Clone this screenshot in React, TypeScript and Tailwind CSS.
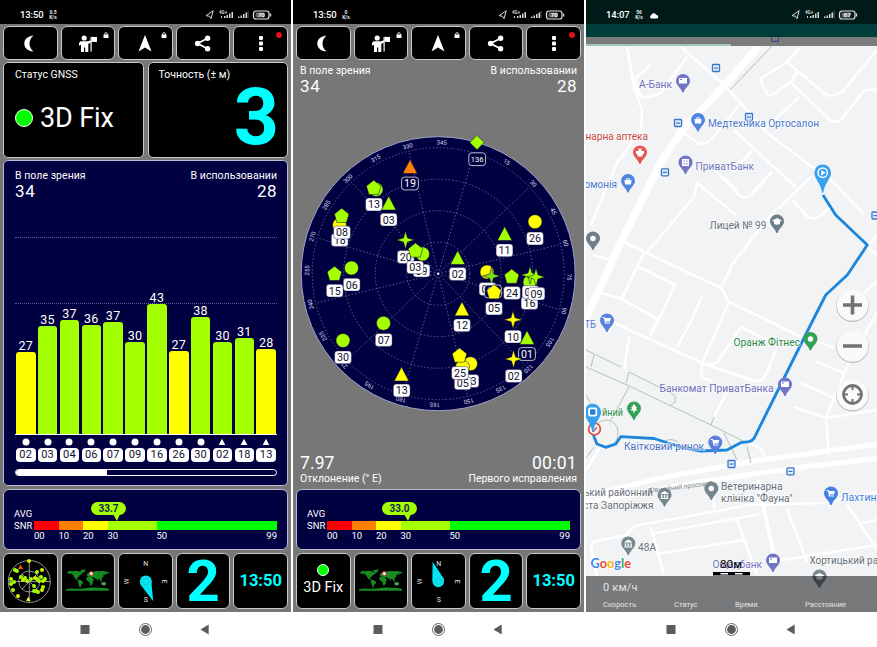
import React from "react";

const LIME = "#a4ff00";
const YELLOW = "#ffff00";

/* ---------- shared phone chrome ---------- */

function StatusIcons({ level }: { level: string }) {
  return (
    <svg width="70" height="12" viewBox="0 0 70 12" fontFamily="Roboto, sans-serif" fill="#d8d8d8">
      <path d="M1 6.700 8.200 1.700 6 9.700 4.600 7.300z" fill="none" stroke="#d8d8d8" strokeWidth="1" />
      <text x="14" y="4.500" fontSize="4.500" fontWeight="700">4G+</text>
      <path d="M16 9V7h1v2zM19 9V7h1.500v2zM21.500 9V6H23v3zM24 9V4.500h1.500V9zM26.500 9V3H28v6z" />
      <path d="M33 9V7.500h1.500V9zM35.500 9V6.500H37V9zM38 9V5h1.500v4zM40.500 9V3.500H42V9z" />
      <path d="M42.500 9V2h1v7z" fill="#666" />
      <rect x="48.500" y="2" width="15.500" height="8" rx="2.500" fill="none" stroke="#e4e4e4" strokeWidth="1.200" />
      <rect x="50.500" y="3.500" width="9" height="5" rx="1" fill="#666" />
      <rect x="65" y="4.500" width="1.200" height="3" />
      <text x="56.300" y="8.300" fontSize="6.200" fontWeight="700" textAnchor="middle" fill="#fff">{level}</text>
    </svg>
  );
}

function StatusBar({ time, speed, level, tone, cloud }: { time: string; speed: string; level: string; tone: string; cloud?: boolean }) {
  return (
    <div className={`flex h-6 items-center pl-5 pr-4 pt-[6px] text-white ${tone}`}>
      <span className="w-[25px] text-[9.500px] font-medium leading-none tracking-[-0.1px]">{time}</span>
      <span className="ml-1 flex w-2 flex-col items-center text-[5px] font-bold leading-[5px] text-gray-200">
        <span>{speed}</span>
        <span>K/s</span>
      </span>
      {cloud && (
        <svg className="ml-[6px]" width="10" height="7" viewBox="0 0 10 7" fill="#fff">
          <path d="M2 6.500a1.800 1.800 0 0 1 .2-3.300A2.700 2.700 0 0 1 7.300 3a1.800 1.800 0 0 1 .7 3.500z" />
        </svg>
      )}
      <span className="ml-auto"><StatusIcons level={level} /></span>
    </div>
  );
}

function NavBar() {
  return (
    <div className="flex h-[35px] items-center bg-white pl-[79px]">
      <svg width="134" height="16" viewBox="0 0 134 16" fill="#5c5c5c">
        <rect x="1.500" y="3" width="9" height="9" />
        <circle cx="66.500" cy="7.500" r="6" fill="none" stroke="#666" strokeWidth="1" />
        <circle cx="66.500" cy="7.500" r="4.400" />
        <path d="M121.500 7.500l8.200-5v10z" />
      </svg>
    </div>
  );
}

/* ---------- toolbar ---------- */

const Lock = () => (
  <svg className="absolute right-[5px] top-[5px]" width="6" height="7" viewBox="0 0 6 7">
    <rect x="0.500" y="2.500" width="5" height="3.500" fill="#fff" />
    <path d="M1.700 3V1.900a1.300 1.300 0 0 1 2.600 0V3" fill="none" stroke="#fff" strokeWidth=".8" />
  </svg>
);

const toolIcons = [
  <path key="moon" d="M12.500 1.700C10.500 1.400 3.300 3 3.300 9.500S10.500 17.700 12.500 17.300C7.200 13.500 7.200 5.500 12.500 1.700z" />,
  <g key="guide">
    <circle cx="5.200" cy="4" r="2.600" />
    <path d="M1.500 7.300h7.700l2.600-1 .7 1.700-3.200 2V18H6.200v-4.500H5V18H2v-7H1l-1 1V9z" />
    <path d="M11.500 3h1.200v14.500h-1.200z" />
    <path d="M12.500 3c2-1 3 .8 5.500-.2v5c-2.500 1-3.500-.8-5.500.2z" />
  </g>,
  <path key="nav" d="M9 1l6.500 16.500L9 13.500 2.500 17.500z" />,
  <g key="share">
    <circle cx="13.600" cy="4.200" r="2.700" />
    <circle cx="3.600" cy="9.500" r="2.700" />
    <circle cx="13.600" cy="14.800" r="2.700" />
    <path d="M13.600 4.200L3.600 9.500l10 5.300" fill="none" stroke="#fff" strokeWidth="1.800" />
  </g>,
  <g key="more">
    <rect x="7" y="2" width="4" height="4" rx="1" />
    <rect x="7" y="7.500" width="4" height="4" rx="1" />
    <rect x="7" y="13" width="4" height="4" rx="1" />
  </g>,
];

function Toolbar() {
  return (
    <div className="grid h-[34px] grid-cols-5 gap-[3px]">
      {toolIcons.map((icon, i) => (
        <div key={i} className="relative flex items-center justify-center rounded-[6px] border border-[#c9c9c9] bg-black">
          <svg width="18" height="19" viewBox="0 0 18 19" fill="#fff">{icon}</svg>
          {(i === 1 || i === 2) && <Lock />}
          {i === 4 && <span className="absolute right-[5px] top-[5px] h-[6px] w-[6px] rounded-full bg-[#e0101c]" />}
        </div>
      ))}
    </div>
  );
}

/* ---------- panels ---------- */

function Counts() {
  return (
    <div className="flex justify-between text-white">
      <div>
        <div className="text-[10.500px] leading-[14px] tracking-[0.05px]">В поле зрения</div>
        <div className="text-[17px] leading-[17px] tracking-[0.8px]">34</div>
      </div>
      <div className="text-right">
        <div className="text-[10.500px] leading-[14px] tracking-[0.05px]">В использовании</div>
        <div className="text-[17px] leading-[17px] tracking-[0.5px]">28</div>
      </div>
    </div>
  );
}

const signals = [
  { id: "02", v: 27, h: 82, c: YELLOW, glonass: false },
  { id: "03", v: 35, h: 108, c: LIME, glonass: false },
  { id: "04", v: 37, h: 114, c: LIME, glonass: false },
  { id: "06", v: 36, h: 109, c: LIME, glonass: false },
  { id: "07", v: 37, h: 112, c: LIME, glonass: false },
  { id: "09", v: 30, h: 92, c: LIME, glonass: false },
  { id: "16", v: 43, h: 130, c: LIME, glonass: false },
  { id: "26", v: 27, h: 83, c: YELLOW, glonass: false },
  { id: "30", v: 38, h: 117, c: LIME, glonass: false },
  { id: "02", v: 30, h: 92, c: LIME, glonass: true },
  { id: "18", v: 31, h: 96, c: LIME, glonass: true },
  { id: "13", v: 28, h: 85, c: YELLOW, glonass: true },
];

function SignalChart() {
  return (
    <div className="flex h-[326px] flex-col rounded-[5px] border border-[#b9b9d0] bg-[#010040] pb-[9px] pl-[11px] pr-[10px] pt-[8px]">
      <Counts />
      <div className="relative flex flex-1 items-end justify-between border-b border-white px-px">
        <div className="absolute inset-x-0 bottom-[196px] border-t border-dotted border-[#5a5a94]" />
        <div className="absolute inset-x-0 bottom-[130px] border-t border-dotted border-[#5a5a94]" />
        {signals.map((s, i) => (
          <div key={i} className="relative flex w-[19.500px] flex-col items-center">
            <span className="text-[12.500px] leading-[12px] tracking-[0.3px] text-white">{s.v}</span>
            <div className="w-[19.500px] rounded-t-[3px]" style={{ height: s.h, backgroundColor: s.c }} />
          </div>
        ))}
      </div>
      <div className="mt-[3px] flex justify-between px-px">
        {signals.map((s, i) => (
          <div key={i} className="flex w-[19.500px] flex-col items-center">
            <svg width="8" height="8" viewBox="0 0 8 8" fill="#fff">
              {s.glonass ? <path d="M4 .8l3.300 6.200H.7z" /> : <circle cx="4" cy="4" r="3.500" />}
            </svg>
            <span className="mt-[2px] h-[14px] w-[19.500px] rounded-[4px] bg-white text-center text-[11px] leading-[14px] tracking-[0.2px] text-[#101030]">
              {s.id}
            </span>
          </div>
        ))}
      </div>
      <div className="mt-[7px] h-[7px] rounded-full border border-white">
        <div className="h-full w-[91px] rounded-l-full bg-white" />
      </div>
    </div>
  );
}

function SnrPanel({ value, first }: { value: string; first?: boolean }) {
  return (
    <div className="flex h-[61px] rounded-[6px] border border-[#b9b9d0] bg-[#010040] pl-[10px] pr-[10px] text-white">
      <div className="w-5 pt-[18px] text-[9.500px] leading-[11.500px]">
        <div>AVG</div>
        <div>SNR</div>
      </div>
      <div className="relative flex-1 pt-[31px]">
        <div className={`absolute top-[12px] flex h-[13px] w-[35px] items-center justify-center rounded-full bg-[#a4ff00] text-[10px] font-bold leading-none text-[#14245a] ${first ? "left-[57px]" : "left-[55px]"}`}>
          {value}
          <svg className="absolute right-[6px] top-[12px]" width="7" height="7" viewBox="0 0 7 7" fill={LIME}>
            <path d="M0 0h7L4 7z" />
          </svg>
        </div>
        <div className="flex h-[9px]">
          <div className="w-[24.500px] bg-[#ff0000]" />
          <div className="w-[24.500px] bg-[#ff8000]" />
          <div className="w-[24.500px] bg-[#ffff00]" />
          <div className="w-[49px] bg-[#a4ff00]" />
          <div className="flex-1 bg-[#00ff00]" />
        </div>
        <div className="flex text-[9.500px] leading-[11px]">
          <span className="w-[24.500px]">00</span>
          <span className="w-[24.500px]">10</span>
          <span className="w-[24.500px]">20</span>
          <span className="w-[49px]">30</span>
          <span>50</span>
          <span className="ml-auto">99</span>
        </div>
      </div>
    </div>
  );
}

/* ---------- bottom tiles ---------- */

const dots: [number, number][] = [
  [30, 7], [16, 16], [18, 17], [38, 18], [43, 16], [12, 25], [15, 28], [22, 23], [24, 26], [26, 24], [28, 27], [14, 36],
  [19, 42], [38, 25], [40, 27], [42, 23], [44, 27], [35, 32], [37, 37], [39, 38], [43, 36], [46, 25], [44, 33], [32, 25], [36, 24], [12, 30], [35, 37],
];

function MiniSky() {
  return (
    <svg width="56" height="54" viewBox="3 0 56 54">
      <g fill="none" stroke="#b8b8b8" strokeWidth=".8">
        <circle cx="30.300" cy="27.500" r="21" />
        <circle cx="30.300" cy="27.500" r="10.500" />
        <path d="M30.300 6.500v42M9.300 27.500h42M23 20l15 15M38 20L23 35" />
      </g>
      {dots.map(([x, y], i) => <circle key={i} cx={x} cy={y} r="2" fill={i % 4 === 0 ? "#d9f000" : LIME} />)}
      <path d="M21.500 10.500l2.500 4.500h-5z" fill="#ff5a00" />
      <path d="M29.300 42.500l2.200 4.500h-4.400z" fill={YELLOW} />
    </svg>
  );
}

function WorldMap() {
  return (
    <svg width="44" height="24" viewBox="0 0 44 24" fill="#178a22">
      <path d="M1 3.500l2.500-1.700 3 .4 3.500-.5 4 1 1.500-.5 1.500 1.500-1.500 1.500-1.800 1-1 1.800-1.500.6-.2 1.400 1.200.5.700 1L11 11 9 9.500 7.500 6.500 5 4.500 2.500 5z" />
      <path d="M12.500 10.800l2 .2 2.800 2-.8 1.700-1.300 1-.5 2.300-1 .8-.7-3-1.200-2.500z" />
      <path d="M14 1.300l4.500-.8 1.300.5-2 2.500-1.300.5z" />
      <path d="M20.500 6.500l.8-1.800 2-1.500 1.500-1 2 .8 3-1 4 .2 4-.3 3 .8 2.700.4-1 1.300-2 .2-.7 1.500-1.500-.8-1 .7.300 1.500-1.600 1.300-.5 2-1.200 1-1.200-2-1 .2-.5 2-1.300-2.200-2-.7-1.300-1-1.500.2-1-.6z" />
      <path d="M20.800 8l2-.7 3 .6 1.200 2 1 .6-1 1.800-.4 2.500-1.600 1.900-1-.8-.5-3-2.400-1.200-.8-2z" />
      <path d="M35 14.500l1.800-1.500 1.500.3.800-.5 1 2-.8 1.700-1.500-.3-1.500.2z M34 10.500l1.500 1 1.500 1-2-.3z" fill="#4f9a58" />
      <path d="M0 20.500c5-2 9-.5 14-.7s9-1.800 14-1.300 10-.3 15 1.500v1.800H0z" />
      <circle cx="25.300" cy="4.600" r="1.900" fill="#fff" stroke="#e03030" strokeWidth="1" />
    </svg>
  );
}

function Compass({ up }: { up?: boolean }) {
  return (
    <svg width="53" height="54" viewBox="0 0 53 54" fill="#e8e8e8" fontFamily="Roboto, sans-serif" fontSize="7" textAnchor="middle">
      {up ? (
        <g>
          <path d="M20.800 7.500L20.500 27l6 3.500 6-5z" fill="#00e8f4" />
          <circle cx="26.500" cy="27.500" r="5.800" fill="#00e8f4" />
          <circle cx="26.500" cy="27.500" r="3.200" fill="none" stroke="#40a8b8" strokeWidth=".7" />
        </g>
      ) : (
        <g>
          <path d="M34.500 47.500L22 31l10.500-4z" fill="#00e8f4" />
          <circle cx="27" cy="27.500" r="6" fill="#00e8f4" />
          <circle cx="27" cy="27.500" r="3.200" fill="none" stroke="#40a8b8" strokeWidth=".7" />
        </g>
      )}
      <text x="27" y="11.500">N</text>
      <text x="27" y="48.500">S</text>
      <text transform="translate(10.500 27.500) rotate(-90)" fontSize="6.500">W</text>
      <text transform="translate(43 27.500) rotate(90)" fontSize="6.500">E</text>
    </svg>
  );
}

function Tiles({ fix }: { fix?: boolean }) {
  const tile = "flex items-center justify-center rounded-[6px] border border-[#c9c9c9] bg-black";
  return (
    <div className="grid h-[56px] grid-cols-5 gap-[3px] text-white">
      <div className={`${tile} flex-col`}>
        {fix ? (
          <>
            <span className="mt-[-3px] h-3 w-3 rounded-full border border-white bg-[#00ff00]" />
            <span className="mt-[4px] whitespace-nowrap text-[14.500px] leading-[16px]">3D Fix</span>
          </>
        ) : <MiniSky />}
      </div>
      <div className={tile}><WorldMap /></div>
      <div className={tile}><Compass up={fix} /></div>
      <div className={`${tile} text-[58px] font-bold leading-[52px] text-[#00ffff]`}>2</div>
      <div className={`${tile} text-[16.500px] font-bold leading-none text-[#00ffff]`}>13:50</div>
    </div>
  );
}

/* ---------- sky plot ---------- */

type Shape = "circle" | "tri" | "pent" | "star" | "diamond";
type Mark = { k: Shape; x: number; y: number; c: string } | { k: "tag"; x: number; y: number; t: string; dark?: boolean };

const L = LIME;
const Y = YELLOW;
const marks: Mark[] = [
  { k: "diamond", x: 477, y: 142.5, c: L }, { k: "tag", x: 477.2, y: 159.2, t: "136", dark: true },
  { k: "tri", x: 410, y: 167, c: "#ff8000" }, { k: "tag", x: 410, y: 183.5, t: "19", dark: true },
  { k: "circle", x: 376, y: 189.5, c: L }, { k: "pent", x: 373.7, y: 188, c: L }, { k: "tag", x: 374, y: 204.5, t: "13" },
  { k: "tri", x: 388.7, y: 203.5, c: L }, { k: "tag", x: 388.7, y: 219.7, t: "03" },
  { k: "circle", x: 339.5, y: 225, c: Y }, { k: "tag", x: 339.7, y: 240, t: "18" },
  { k: "pent", x: 341.7, y: 216, c: L }, { k: "tag", x: 342, y: 232.5, t: "08" },
  { k: "star", x: 405.5, y: 240, c: L }, { k: "tag", x: 405.7, y: 257, t: "20" },
  { k: "circle", x: 422.5, y: 254, c: L }, { k: "tag", x: 421.5, y: 270.7, t: "09" },
  { k: "pent", x: 415.5, y: 250.7, c: L }, { k: "tag", x: 415.2, y: 267.3, t: "03" },
  { k: "tri", x: 457.7, y: 258, c: L }, { k: "tag", x: 457.7, y: 274, t: "02" },
  { k: "tri", x: 504.7, y: 234, c: L }, { k: "tag", x: 504.5, y: 250.3, t: "11" },
  { k: "circle", x: 535, y: 221.7, c: Y }, { k: "tag", x: 535, y: 238.5, t: "26" },
  { k: "circle", x: 351.5, y: 268, c: L }, { k: "tag", x: 351.7, y: 284.7, t: "06" },
  { k: "pent", x: 334.5, y: 274, c: L }, { k: "tag", x: 334.7, y: 290.7, t: "15" },
  { k: "circle", x: 383.5, y: 323.3, c: L }, { k: "tag", x: 383.7, y: 340, t: "07" },
  { k: "circle", x: 343, y: 340.5, c: L }, { k: "tag", x: 343, y: 357.3, t: "30" },
  { k: "tri", x: 401.5, y: 374.5, c: Y }, { k: "tag", x: 401.7, y: 390.5, t: "13" },
  { k: "tri", x: 462, y: 309.3, c: Y }, { k: "tag", x: 462, y: 325.3, t: "12" },
  { k: "circle", x: 487, y: 272, c: Y }, { k: "star", x: 491.5, y: 276, c: "#7fe010" },
  { k: "tag", x: 487.5, y: 289, t: "02" }, { k: "tag", x: 493, y: 291.5, t: "14", dark: true },
  { k: "pent", x: 494, y: 292.3, c: Y }, { k: "tag", x: 494, y: 308.5, t: "05" },
  { k: "pent", x: 511.7, y: 276.8, c: L }, { k: "tag", x: 512, y: 293, t: "24" },
  { k: "circle", x: 530, y: 282, c: L }, { k: "star", x: 530, y: 275, c: L }, { k: "tag", x: 529.5, y: 303, t: "16" },
  { k: "tag", x: 530.5, y: 292, t: "04" }, { k: "star", x: 536, y: 277, c: L }, { k: "tag", x: 536.5, y: 293.7, t: "09" },
  { k: "star", x: 513, y: 319.7, c: Y }, { k: "tag", x: 513, y: 336.7, t: "10" },
  { k: "tri", x: 527, y: 338, c: L }, { k: "tag", x: 527, y: 354, t: "01", dark: true },
  { k: "star", x: 513.5, y: 359, c: Y }, { k: "tag", x: 513.7, y: 376, t: "02" },
  { k: "circle", x: 470.5, y: 363.7, c: Y }, { k: "tag", x: 470.5, y: 381, t: "03" },
  { k: "circle", x: 462.5, y: 367, c: Y }, { k: "tag", x: 462.7, y: 383.3, t: "05" },
  { k: "pent", x: 459.5, y: 355.7, c: Y }, { k: "tag", x: 460, y: 373, t: "25" },
];

const shapePaths: Record<Shape, string> = {
  circle: "M-7 0a7 7 0 1 0 14 0a7 7 0 1 0-14 0z",
  tri: "M0-7.500L7.300 6.500H-7.300z",
  pent: "M0-7.800L7.300-2 4.800 6.500H-4.800L-7.300-2z",
  star: "M0-9L2-2 9 0 2 2 0 9-2 2-9 0-2-2z",
  diamond: "M0-7.200L7.200 0 0 7.200-7.200 0z",
};

function SkyPlot() {
  const cx = 438.2;
  const cy = 273.7;
  const at = (deg: number, r: number) => {
    const a = (deg * Math.PI) / 180;
    return [cx + r * Math.sin(a), cy - r * Math.cos(a)];
  };
  const azimuths = Array.from({ length: 24 }, (_, i) => i * 15).filter((a) => a !== 0);
  return (
    <svg width="291" height="290" viewBox="293 128 291 290" fontFamily="Roboto, sans-serif" textAnchor="middle">
      <circle cx={cx} cy={cy} r="137" fill="#010040" stroke="#a0a0c8" strokeWidth="1" />
      <g fill="none" stroke="#65659c" strokeWidth=".9" strokeDasharray="1.500 2">
        {[31.5, 63, 94.5, 126].map((r) => <circle key={r} cx={cx} cy={cy} r={r} />)}
        {Array.from({ length: 12 }, (_, i) => {
          const [x, y] = at(i * 30 + 16.5, 126);
          return <path key={i} d={`M${cx} ${cy}L${x} ${y}`} />;
        })}
      </g>
      <circle cx={cx} cy={cy} r="1" fill="#fff" />
      {azimuths.map((a) => {
        const [x, y] = at(a + 16.5, 129);
        return (
          <text key={a} fontSize="6" fill="#dcdcf0" transform={`translate(${x} ${y}) rotate(${a + 16.5})`}>{a}</text>
        );
      })}
      {marks.map((m, i) =>
        m.k === "tag" ? (
          <g key={i}>
            <rect x={m.x - 8.4} y={m.y - 6.4} width="16.800" height="12.800" rx="3" fill={m.dark ? "#010040" : "#fff"} stroke={m.dark ? "#d0d0e0" : "#010040"} strokeWidth={m.dark ? 0.9 : 0.4} />
            <text x={m.x} y={m.y + (m.t.length > 2 ? 2.8 : 3.8)} fontSize={m.t.length > 2 ? 7.5 : 10.7} fill={m.dark ? "#fff" : "#101030"}>{m.t}</text>
          </g>
        ) : (
          <path key={i} d={shapePaths[m.k]} transform={`translate(${m.x} ${m.y})`} fill={m.c} stroke="#010040" strokeWidth=".5" />
        )
      )}
    </svg>
  );
}

/* ---------- map ---------- */

const streets = [
  "M681 47L722 83 741 103 766 132 807 163 831 180 864 214",
  "M627 47L634 87 642 110 641 130 617 163 591 225",
  "M687 57L661 93Q650 98 641 97L634 80 651 65",
  "M801 47L787 62 763 77Q760 80 762 84L767 94Q770 96 774 94L791 82 797 72",
  "M787 62L825 94Q833 99 844 90L877 50",
  "M791 83L830 120Q838 125 844 116L863 92Q867 88 877 90",
  "M741 103L714 136Q706 146 698 143L684 133",
  "M799 97L764 130",
  "M734 130L766 160 796 187",
  "M752 151L732 172",
  "M792 200L808 217Q814 221 820 216L831 207",
  "M779 208L811 177",
  "M712 168L736 190M697 183L736 215M697 183L694 197 647 252",
  "M727 180L739 195Q744 200 750 196L772 172",
  "M624 242L647 253 721 288 729 302 771 322 801 337",
  "M721 288L732 265 757 232 777 208",
  "M644 253L622 298M601 293L622 299 659 320",
  "M639 267L675 285 657 323 650 332",
  "M702 297L689 325 677 347",
  "M729 302L719 325 702 363",
  "M609 320L629 330 707 365 755 381Q763 382 766 374L776 350",
  "M702 363L701 377 712 381M741 327L717 363 707 365",
  "M741 327L771 342M629 337L624 370",
  "M659 320L650 336M593 255L610 260",
  "M877 281L862 295M877 255L867 247 877 235",
  "M817 362L844 373 877 312M801 383L834 398 850 360M814 340L834 348",
  "M794 407L826 418 877 410M826 418L829 455M834 398L826 418",
  "M729 388L714 417M744 441L760 448 768 462",
  "M600 448L586 470",
  "M597 577L591 548Q591 543 596 541L627 535Q630 527 640 525L750 505 824 503 877 492",
  "M651 534L761 514M651 527L664 575M656 554L744 540",
  "M737 519L757 575M787 509L807 562M847 505L877 549M770 562L877 545M862 523L877 520",
  "M714 508L714 500",
];

const paths = [
  "M586 350L621 367M586 367L627 385 711 425 747 443M594 355L591 367",
  "M629 372L671 393Q677 396 675 402L671 405M629 372L626 383",
  "M714 417L711 425M629 387L611 420M724 433L737 460M747 447L751 463",
  "M586 395L592 406M586 458L594 447",
  "M594 432a12 12 0 0 1 24 0q0 8-4 11M664 442q6-5 14 0",
];

const pins: { x: number; y: number; c: string; g: "card" | "bag" | "cross" | "dot" | "cap" | "cart" | "tree" | "bank" | "box" }[] = [
  { x: 683, y: 81, c: "#7176c4", g: "card" },
  { x: 698, y: 120, c: "#5086df", g: "bag" },
  { x: 640, y: 152.5, c: "#e4584f", g: "cross" },
  { x: 685.5, y: 162.5, c: "#7176c4", g: "box" },
  { x: 628, y: 181, c: "#5086df", g: "bag" },
  { x: 593, y: 238.5, c: "#6f7f86", g: "dot" },
  { x: 777, y: 221.5, c: "#6a7f87", g: "cap" },
  { x: 607, y: 320.5, c: "#5b80dd", g: "cart" },
  { x: 810.5, y: 339, c: "#35a155", g: "dot" },
  { x: 785, y: 384.5, c: "#7176c4", g: "card" },
  { x: 634, y: 408.5, c: "#35a155", g: "tree" },
  { x: 715.3, y: 442.5, c: "#5b80dd", g: "cart" },
  { x: 664.5, y: 495, c: "#75868f", g: "bank" },
  { x: 711.3, y: 488.5, c: "#75868f", g: "dot" },
  { x: 831, y: 493.5, c: "#4682e4", g: "cart" },
  { x: 628.3, y: 543.5, c: "#75868f", g: "bank" },
  { x: 773, y: 560.5, c: "#7176c4", g: "card" },
  { x: 819.5, y: 576.5, c: "#75868f", g: "cap" },
];

const glyphs = {
  card: <path d="M-4-3h8v5.500h-8zM-3-2v1h2v-1z" fillRule="evenodd" />,
  bag: <path d="M-3.500-1H-2a2 2 0 0 1 4 0h1.500l-.5 4.500h-6zM-1-1h2a1 1 0 0 0-2 0z" fillRule="evenodd" />,
  cross: <path d="M-1.500-4h3v2.500H4v3H2.500V4h-5V1.500H-4v-3h2.500z" />,
  dot: <circle r="2.700" />,
  cap: <path d="M-5-1L0-3.500 5-1 3 0v2.500Q0 4-3 2.500V0z" />,
  cart: <path d="M-4.500-3.500h2l.5 1H4L3 1h-4.500l.5 1h4v1h-5L-3-2.500h-1.500z" />,
  tree: <path d="M0-4.500L3-.5H1.800L3.500 2H.7v2H-.7V2h-2.800l1.700-2.500H-3z" />,
  bank: <path d="M-4-1.500L0-4l4 2.500V-1h-8zM-3.500-.3h1.400v3h-1.400zM-.7-.3H.7v3H-.7zM2.100-.3h1.400v3H2.100zM-4 3h8v1h-8z" />,
  box: <path d="M-3.500-3.500h7v7h-7zM-2-2v1.300h1.300V-2zM.7-2v1.300H2V-2zM-2 .7V2h1.300V.7zM.7.7V2H2V.7z" fillRule="evenodd" />,
};

const places: { t: string; x: number; y: number; w: number; c: string }[] = [
  { t: "А-Банк", x: 639, y: 88, w: 33, c: "#6a6fbb" },
  { t: "Медтехника Ортосалон", x: 708, y: 127, w: 111, c: "#4a78cc" },
  { t: "нарна аптека", x: 585.5, y: 139.5, w: 62.5, c: "#c5443f" },
  { t: "ПриватБанк", x: 695.5, y: 169.5, w: 58.5, c: "#7074bd" },
  { t: "омонія", x: 584.5, y: 188, w: 32.5, c: "#4a78cc" },
  { t: "Лицей № 99", x: 709.5, y: 228.5, w: 57, c: "#667078" },
  { t: "ТБ", x: 584.5, y: 328, w: 11.5, c: "#4a78cc" },
  { t: "Оранж Фітнес", x: 733.5, y: 346, w: 66.5, c: "#2c8a48" },
  { t: "Банкомат ПриватБанка", x: 659.5, y: 391.5, w: 114, c: "#6a6fbb" },
  { t: "йний", x: 602, y: 415.5, w: 21, c: "#2c8a48" },
  { t: "Квітковий ринок", x: 624, y: 449.5, w: 80, c: "#4a70c4" },
  { t: "Ветеринарна", x: 721, y: 490, w: 61.5, c: "#667078" },
  { t: "клініка \"Фауна\"", x: 721, y: 502, w: 71.5, c: "#667078" },
  { t: "ький районний", x: 584, y: 496.3, w: 69, c: "#667078" },
  { t: "ста Запоріжжя", x: 583, y: 508.5, w: 70.5, c: "#667078" },
  { t: "48А", x: 638, y: 551, w: 18, c: "#667078" },
  { t: "Лахтинс", x: 841, y: 501, w: 41, c: "#3f7fe0" },
  { t: "Хортицький ра", x: 809.5, y: 563.5, w: 68.5, c: "#667078" },
  { t: "Ощадбанк", x: 712.5, y: 568, w: 49.5, c: "#7074bd" },
];

const stops: [number, number][] = [[716, 68], [678, 123], [749, 117], [665, 172.3], [875.5, 215.5], [731.5, 464], [790.5, 471.3]];

function CityMap() {
  return (
    <svg width="291" height="566" viewBox="586 46 291 566" fontFamily="Roboto, sans-serif">
      <rect x="586" y="46" width="291" height="566" fill="#f1f3f4" />
      <g fill="none" stroke="#fff" strokeWidth="2.600" strokeLinejoin="round">
        {streets.map((d) => <path key={d} d={d} />)}
        <path d="M759 46L724 86 684 128 662 160 622 240 599 290 584 322" strokeWidth="7.500" />
        <path d="M584 497L660 478 760 460 880 444M584 503L700 482 795 468 880 458" strokeWidth="5" />
        <path d="M758 480L762 500 776 565" strokeWidth="4" />
      </g>
      <g fill="none" stroke="#a9beae" strokeWidth=".9">
        {paths.map((d) => <path key={d} d={d} />)}
        <path d="M772 46L730 90" stroke="#b0b8b5" />
      </g>
      <path
        d="M823 195L835.700 215 867.300 245 847.300 275 825.700 295 810.500 325 754 438.300Q752 441 749 441.700L740.700 442.700 727 450 700.700 451 684 448 654 438.500 620.700 436.700 615.700 444 605.700 447.300 597 444 593.300 435"
        fill="none" stroke="#1b86dc" strokeWidth="2.800" strokeLinejoin="round"
      />
      {stops.map(([x, y]) => (
        <g key={x} transform={`translate(${x} ${y})`}>
          <rect x="-3.500" y="-3.500" width="7" height="7" rx=".8" fill="#e4edfa" stroke="#3b78c8" strokeWidth="1.300" />
          <path d="M-2-.5h4v1.200h-4z" fill="#3b78c8" />
        </g>
      ))}
      {places.map((p) => (
        <text key={p.t} x={p.x} y={p.y} fontSize="11" textLength={p.w} lengthAdjust="spacingAndGlyphs" fill={p.c} stroke="#fff" strokeWidth="1.500" strokeOpacity=".75" paintOrder="stroke">{p.t}</text>
      ))}
      <text fontSize="7" fill="#7d868c" textLength="64" lengthAdjust="spacingAndGlyphs" transform="translate(649 493) rotate(-7)">Ювілейний проспект</text>
      {pins.map((p) => (
        <g key={`${p.x}-${p.y}`} transform={`translate(${p.x} ${p.y})`}>
          <path d="M-7 0A7 7 0 1 1 7 0C7 4 2 7 .5 11.500h-1C-2 7-7 4-7 0z" fill={p.c} />
          <g fill="#fff">{glyphs[p.g]}</g>
        </g>
      ))}
      <circle cx="594.500" cy="429" r="5.800" fill="#fff" stroke="#d9534a" strokeWidth="1.800" />
      <path d="M593 432l4-5" stroke="#d9534a" strokeWidth="1.500" />
      <g transform="translate(822.700 172.700)">
        <path d="M-8.300 0A8.300 8.300 0 1 1 8.300 0C8.300 6 2 10 .5 20h-1C-2 10-8.300 6-8.300 0z" fill="#369ff0" />
        <circle r="4.700" fill="#369ff0" stroke="#fff" strokeWidth="1.500" />
        <path d="M-1.500-2.800L3 0-1.500 2.800z" fill="#fff" />
      </g>
      <g transform="translate(592.700 412)">
        <path d="M-8.300 0A8.300 8.300 0 1 1 8.300 0C8.300 6 2 10 .5 20h-1C-2 10-8.300 6-8.300 0z" fill="#369ff0" />
        <rect x="-4.500" y="-4.500" width="9" height="9" rx="2" fill="#fff" />
        <rect x="-2.700" y="-2.700" width="5.400" height="5.400" fill="#2880d0" />
      </g>
      {[305, 346, 394.5].map((y) => (
        <g key={y}>
          <circle cx="852.500" cy={y + 0.7} r="16.300" fill="#bdbdbd" />
          <circle cx="852.500" cy={y} r="15.800" fill="#fafafa" />
        </g>
      ))}
      <g fill="none" stroke="#727272" strokeWidth="3.600">
        <path d="M843 305h19M852.500 295.500v19M843 346h19" />
        <circle cx="852.500" cy="394.500" r="9" strokeWidth="2.800" />
        <path d="M852.500 386v4M852.500 399v4M844 394.500h4M857 394.500h4" strokeWidth="2" />
      </g>
      <text x="590.500" y="568" fontSize="14" fontFamily="Lato, sans-serif" fontWeight="700" textLength="40.500" lengthAdjust="spacingAndGlyphs" stroke="#fff" strokeWidth="1.500" paintOrder="stroke">
        <tspan fill="#4285f4">G</tspan><tspan fill="#ea4335">o</tspan><tspan fill="#f4b400">o</tspan><tspan fill="#4285f4">g</tspan><tspan fill="#34a853">l</tspan><tspan fill="#ea4335">e</tspan>
      </text>
      <text x="720" y="568" fontSize="11.500" fill="#000" textLength="22" lengthAdjust="spacingAndGlyphs">80м</text>
      <rect x="713" y="572" width="37" height="3.500" fill="#000" />
      <path d="M720.500 573h7.500v1.500h-7.500zM735 573h7.500v1.500h-7.500z" fill="#fff" />
    </svg>
  );
}

/* ---------- screens ---------- */

function StatusScreen() {
  return (
    <section className="w-[291px]">
      <StatusBar time="13:50" speed="0.5" level="70" tone="bg-black" />
      <div className="flex h-[588px] flex-col bg-[#777777] px-[3px] pt-[2px]">
        <Toolbar />
        <div className="mb-[2px] mt-[2px] grid h-[96px] grid-cols-2 gap-[4px] text-white">
          <div className="rounded-[5px] border border-[#c9c9c9] bg-black pl-[11px] pt-[5px]">
            <div className="text-[10.500px] leading-[14px]">Статус GNSS</div>
            <div className="mt-[20px] flex items-center gap-[7px]">
              <span className="h-[18px] w-[18px] rounded-full border border-white bg-[#00ff00]" />
              <span className="text-[27px] leading-[32px] tracking-[-0.1px]">3D Fix</span>
            </div>
          </div>
          <div className="rounded-[5px] border border-[#c9c9c9] bg-black pl-[10px] pr-[8px] pt-[5px]">
            <div className="text-[10.500px] leading-[14px]">Точность (± м)</div>
            <div className="text-right text-[79px] font-bold leading-[71px] text-[#00ffff]">3</div>
          </div>
        </div>
        <SignalChart />
        <div className="mt-[3px]"><SnrPanel value="33.7" first /></div>
        <div className="mt-[3px]"><Tiles /></div>
      </div>
      <NavBar />
    </section>
  );
}

function SkyScreen() {
  return (
    <section className="w-[291px]">
      <StatusBar time="13:50" speed="0" level="70" tone="bg-black" />
      <div className="flex h-[588px] flex-col bg-[#777777] pt-[2px]">
        <div className="px-[3px]"><Toolbar /></div>
        <div className="h-[68px] px-[7px] pt-[4px]"><Counts /></div>
        <SkyPlot />
        <div className="flex h-[71px] justify-between px-[7px] pt-[36px] text-white">
          <div>
            <div className="text-[17.500px] leading-[18px] tracking-[0.1px]">7.97</div>
            <div className="text-[10.500px] leading-[14px]">Отклонение (° E)</div>
          </div>
          <div className="text-right">
            <div className="text-[17.500px] leading-[18px] tracking-[0.3px]">00:01</div>
            <div className="text-[10.500px] leading-[14px]">Первого исправления</div>
          </div>
        </div>
        <div className="px-[3px]"><SnrPanel value="33.0" /></div>
        <div className="mt-[3px] px-[3px]"><Tiles fix /></div>
      </div>
      <NavBar />
    </section>
  );
}

function TrackScreen() {
  return (
    <section className="w-[291px]">
      <StatusBar time="14:07" speed="56" level="67" tone="bg-[#001a18]" cloud />
      <div className="h-[13px] bg-[#003c39]" />
      <div className="flex h-[9px] flex-col bg-[#7b7b7b]">
        <svg className="ml-[185px]" width="8" height="5" viewBox="0 0 8 5"><path d="M.5 0v4.300h7V0" fill="none" stroke="#3b4a86" strokeWidth="1.200" /></svg>
        <div className="mt-auto h-[2px] w-[145px] bg-[#9fc5bf]" />
      </div>
      <div className="relative h-[566px] overflow-hidden">
        <CityMap />
        <div className="absolute inset-x-0 bottom-0 h-9 bg-black/50 px-[17px] pt-[5px] text-[#e4e4e4]">
          <div className="text-[11px] leading-[13px] tracking-[0.2px]">0 км/ч</div>
          <div className="mt-[6px] flex text-[7.500px] leading-[10px]">
            <span className="w-[71px]">Скорость</span>
            <span className="w-[61px]">Статус</span>
            <span className="w-[70px]">Время</span>
            <span>Расстояние</span>
          </div>
        </div>
      </div>
      <NavBar />
    </section>
  );
}

export default function App() {
  return (
    <main className="flex h-[647px] w-[877px] gap-[2px] overflow-hidden bg-white font-['Roboto','Noto_Sans',sans-serif]">
      <StatusScreen />
      <SkyScreen />
      <TrackScreen />
    </main>
  );
}
